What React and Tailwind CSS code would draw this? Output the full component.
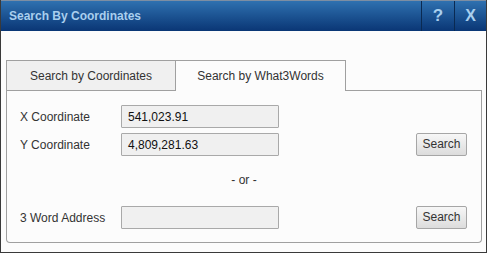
import React from 'react';

const font = { fontFamily: '"Liberation Sans", Arial, sans-serif' };

function Field({ label, value, button }) {
    return (
        <div className="flex items-center h-[23px]">
            <div className="w-[114px] pl-[13px] text-[12px] text-[#333]">{label}</div>
            <div className="w-[158px] h-[23px] border border-[#a9a9a9] bg-[#f0f0f0] rounded-[1px] flex items-center pl-[6px] text-[12px] text-[#111]">
                {value}
            </div>
            <div className="flex-1" />
            {button && (
                <button className="w-[51px] h-[23px] mr-[14px] -mt-[1px] border border-[#a6a6a6] rounded-[2px] bg-gradient-to-b from-[#f7f7f7] to-[#dcdcdc] text-[12px] text-[#333]">
                    Search
                </button>
            )}
        </div>
    );
}

export default function App() {
    return (
        <div style={font} className="w-[487px] h-[253px] flex flex-col bg-[#fcfcfc] border-x border-b border-[#3a3a3a]">
            {/* title bar */}
            <div className="h-[31px] flex border-t border-[#7d8ea3] bg-gradient-to-b from-[#2f71b0] to-[#0a3675]">
                <div className="flex-1 pl-[8px] flex items-center text-[12px] font-bold text-[#a9cfee]">
                    Search By Coordinates
                </div>
                <div className="w-[33px] flex items-center justify-center border-l border-[#0a2a52] text-[17px] font-bold text-[#a9cfee]">?</div>
                <div className="w-[32px] flex items-center justify-center border-l border-[#0a2a52] text-[16px] font-bold text-[#a9cfee]">X</div>
            </div>

            <div className="pt-[29px] pl-[5px] pr-[4px]">
                {/* tabs */}
                <div className="flex h-[31px]">
                    <div className="w-[170px] border border-[#a0a0a0] bg-[#f0f0f0] flex items-center justify-center text-[12px] text-[#333]">
                        Search by Coordinates
                    </div>
                    <div className="w-[170px] border-t border-r border-[#a0a0a0] flex items-center justify-center text-[12px] text-[#333]">
                        Search by What3Words
                    </div>
                    <div className="flex-1 border-b border-[#a0a0a0]" />
                </div>

                {/* panel */}
                <div className="border-x border-b border-[#a0a0a0] rounded-b-[4px] pt-[14px] pb-[13px]">
                    <Field label="X Coordinate" value="541,023.91" />
                    <div className="mt-[5px]">
                        <Field label="Y Coordinate" value="4,809,281.63" button />
                    </div>
                    <div className="mt-[17px] h-[14px] flex items-center justify-center text-[12px] text-[#333]">- or -</div>
                    <div className="mt-[19px]">
                        <Field label="3 Word Address" value="" button />
                    </div>
                </div>
            </div>
        </div>
    );
}
